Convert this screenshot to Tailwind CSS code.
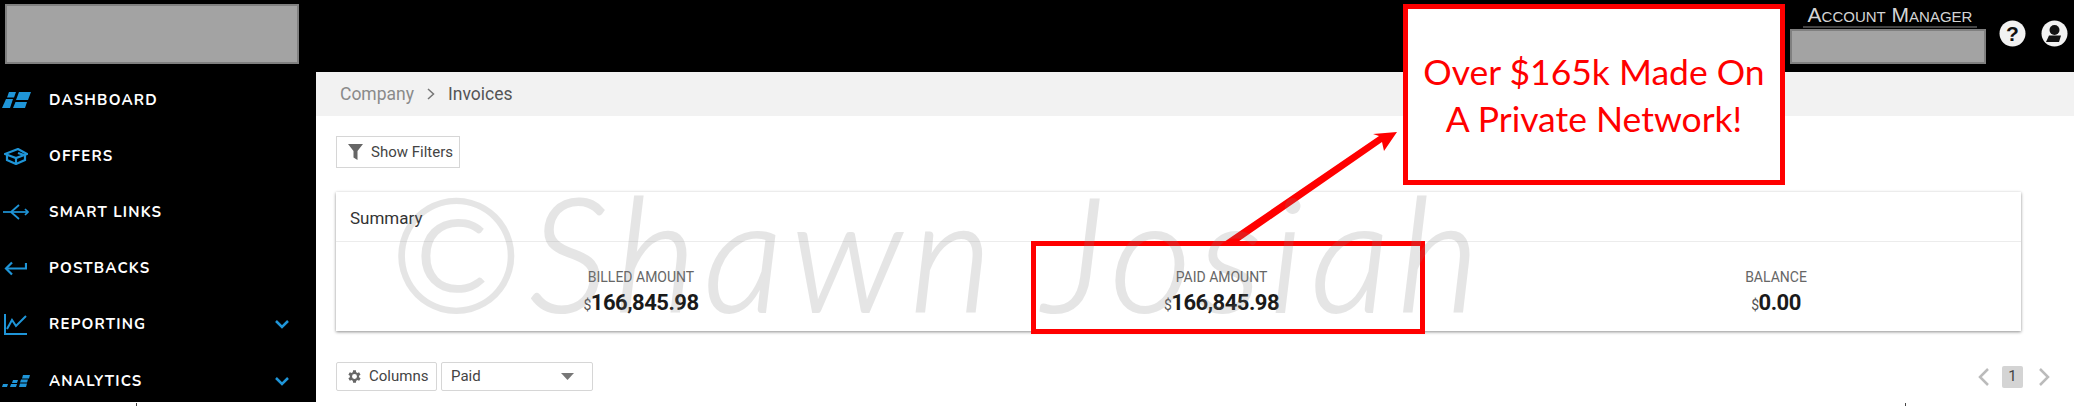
<!DOCTYPE html>
<html>
<head>
<meta charset="utf-8">
<script src="https://cdn.jsdelivr.net/npm/@tailwindcss/browser@4"></script>
</head>
<body class="bg-white">
<div class="relative w-[2074px] h-[406px] overflow-hidden bg-white font-['Roboto',sans-serif]">
  <header class="h-[72px] bg-black flex items-start justify-between">
    <div class="mt-[4px] ml-[5px] w-[294px] h-[60px] bg-[#a3a3a3] border-2 border-[#808080]"></div>
    <div class="flex items-start pr-[6px]">
      <div class="flex flex-col items-center w-[196px] mr-[13px]">
        <div class="mt-[4px] ml-[4px] h-[24px] w-[174px] text-center text-[#d4d4d4] text-[21px] leading-[22px] whitespace-nowrap font-['Liberation_Sans',sans-serif] [font-variant:small-caps] border-b-2 border-[#444]">Account Manager</div>
        <div class="w-[196px] h-[35px] mt-[1px] bg-[#a3a3a3] border-2 border-[#808080]"></div>
      </div>
      <svg class="mt-[20px] mr-[15px]" width="27" height="27" viewBox="0 0 27 27"><circle cx="13.5" cy="13.5" r="13" fill="#f2f2f2"/><text x="13.5" y="21" text-anchor="middle" font-family="Liberation Sans" font-weight="700" font-size="21" fill="#111">?</text></svg>
      <svg class="mt-[20px]" width="27" height="27" viewBox="0 0 27 27"><circle cx="13.5" cy="13.5" r="13" fill="#f2f2f2"/><circle cx="13.5" cy="10" r="5" fill="#111"/><path d="M5 22 L8 15.500 H20 L18 22 Z" fill="#111"/></svg>
    </div>
  </header>
  <div class="flex">
    <aside class="w-[316px] h-[330px] bg-black font-['Nunito','Lato',sans-serif]">
      <nav class="flex flex-col text-white font-bold text-[15px] tracking-[1.2px]">
        <a class="h-[56px] flex items-center">
          <span class="w-[49px] pl-[2px] flex"><svg width="29" height="16" viewBox="0 0 29 16" fill="#1f95d8"><path d="M7 0H14L12 5.500H5Z"/><path d="M17 0H29L26 8H14Z"/><path d="M4 7H11L8 16H0Z"/><path d="M13.500 10H25L23 16H11Z"/></svg></span>DASHBOARD</a>
        <a class="h-[56px] flex items-center">
          <span class="w-[49px] pl-[4px] flex"><svg width="24" height="17" viewBox="0 0 24 17" fill="none" stroke="#1f95d8" stroke-width="2.200"><path d="M1 6L12 10L23 6L14 1L1 6Z"/><path d="M3 7V12L12 16L21 12V7"/><path d="M12 10V16"/><path d="M14 5L20 7"/></svg></span>OFFERS</a>
        <a class="h-[56px] flex items-center">
          <span class="w-[49px] pl-[3px] flex"><svg width="26" height="16" viewBox="0 0 26 16" fill="none" stroke="#1f95d8" stroke-width="1.700"><path d="M0 8H25"/><path d="M8 8L16 1"/><path d="M8 8L16 15"/><path d="M22 5L25 8L22 11"/></svg></span>SMART LINKS</a>
        <a class="h-[56px] flex items-center">
          <span class="w-[49px] pl-[4px] flex"><svg width="23" height="15" viewBox="0 0 23 15" fill="none" stroke="#1f95d8" stroke-width="2.200"><path d="M22 2V7.500H2"/><path d="M8 1.500L2 7.500L8 13.500"/></svg></span>POSTBACKS</a>
        <a class="h-[56px] flex items-center">
          <span class="w-[49px] pl-[4px] flex"><svg width="24" height="21" viewBox="0 0 24 21" fill="none" stroke="#1f95d8" stroke-width="2"><path d="M1 0V20H23"/><path d="M3 15L8 6L12 12L22 2"/></svg></span>REPORTING
          <svg class="ml-auto mr-[27px]" width="14" height="9" viewBox="0 0 14 9" fill="none" stroke="#1f95d8" stroke-width="2.500"><path d="M1 1L7 7L13 1"/></svg></a>
        <a class="h-[58px] flex items-center">
          <span class="w-[49px] pl-[2px] flex"><svg width="28" height="13" viewBox="0 0 28 13" fill="#1f95d8"><path d="M1 9H6L5 12H0Z"/><path d="M9 9H15L14 12H8Z"/><path d="M18 8.500H25L24 12H17Z"/><path d="M11 5H16L15 8H10Z"/><path d="M19 4.500H26L25 7.500H18Z"/><path d="M21 0H28L27 3.500H20Z"/></svg></span>ANALYTICS
          <svg class="ml-auto mr-[27px]" width="14" height="9" viewBox="0 0 14 9" fill="none" stroke="#1f95d8" stroke-width="2.500"><path d="M1 1L7 7L13 1"/></svg></a>
      </nav>
    </aside>
    <main class="flex-1 bg-white">
      <div class="h-[44px] bg-[#f2f2f2] flex items-center pl-[24px] text-[17.5px] text-[#8a8a8a]">
        <span>Company</span>
        <svg class="mx-[13px]" width="8" height="12" viewBox="0 0 8 12" fill="none" stroke="#777" stroke-width="1.500"><path d="M1 1L6.500 6L1 11"/></svg>
        <span class="text-[#555]">Invoices</span>
      </div>
      <div class="pl-[20px] pr-[53px]">
        <button class="mt-[20px] h-[32px] w-[124px] border border-[#d6d6d6] flex items-center pl-[11px] text-[15px] text-[#444]">
          <svg class="mr-[8px]" width="15" height="16" viewBox="0 0 15 16" fill="#666"><path d="M0 0H15L9.500 7V16L5.500 13.500V7Z"/></svg>Show Filters</button>
        <section class="mt-[24px] h-[139px] bg-white shadow-[0_1px_3px_rgba(0,0,0,0.45)]">
          <div class="h-[50px] pt-[5px] border-b border-[#ececec] flex items-center pl-[14px] text-[17px] text-[#333]">Summary</div>
          <div class="grid grid-cols-[610px_551px_1fr] text-center pt-[27px]">
            <div><div class="text-[14px] leading-[16px] text-[#666]">BILLED AMOUNT</div><div class="mt-[5px] text-[22px] leading-[26px] tracking-[-0.5px] font-bold text-[#1a1a1a]"><span class="text-[14px] font-normal text-[#555]">$</span>166,845.98</div></div>
            <div><div class="text-[14px] leading-[16px] text-[#666]">PAID AMOUNT</div><div class="mt-[5px] text-[22px] leading-[26px] tracking-[-0.5px] font-bold text-[#1a1a1a]"><span class="text-[14px] font-normal text-[#555]">$</span>166,845.98</div></div>
            <div class="pl-[34px]"><div class="text-[14px] leading-[16px] text-[#666]">BALANCE</div><div class="mt-[5px] text-[22px] leading-[26px] tracking-[-0.5px] font-bold text-[#1a1a1a]"><span class="text-[14px] font-normal text-[#555]">$</span>0.00</div></div>
          </div>
        </section>
        <div class="mt-[31px] flex items-center">
          <button class="h-[29px] w-[101px] border border-[#d6d6d6] rounded-[2px] flex items-center pl-[9px] text-[15px] text-[#444]">
            <svg class="mr-[6px]" width="17" height="17" viewBox="0 0 24 24" fill="#666"><path d="M19.400 13a7.600 7.600 0 0 0 0-2l2.100-1.600-2-3.500-2.500 1a7.500 7.500 0 0 0-1.700-1L15 3.300h-4l-.4 2.600a7.500 7.500 0 0 0-1.700 1l-2.500-1-2 3.500L6.500 11a7.600 7.600 0 0 0 0 2l-2.100 1.600 2 3.500 2.500-1a7.500 7.500 0 0 0 1.700 1l.4 2.600h4l.4-2.600a7.500 7.500 0 0 0 1.700-1l2.500 1 2-3.500ZM13 15.500a3.500 3.500 0 1 1 0-7 3.500 3.500 0 0 1 0 7Z" transform="translate(-1 0)"/></svg>Columns</button>
          <div class="ml-[4px] h-[29px] w-[152px] border border-[#d6d6d6] rounded-[2px] flex items-center justify-between pl-[9px] pr-[18px] text-[15px] text-[#444]">
            <span>Paid</span>
            <svg width="13" height="7" viewBox="0 0 13 7" fill="#777"><path d="M0 0H13L6.500 7Z"/></svg>
          </div>
          <div class="ml-auto flex items-center mr-[-29px]">
            <svg width="12" height="18" viewBox="0 0 12 18" fill="none" stroke="#bbb" stroke-width="2.500"><path d="M10 1L2 9L10 17"/></svg>
            <span class="ml-[12px] mr-[15px] w-[21px] h-[22px] bg-[#d4d4d4] rounded-[2px] flex items-center justify-center text-[15px] text-[#444]">1</span>
            <svg width="12" height="18" viewBox="0 0 12 18" fill="none" stroke="#bbb" stroke-width="2.500"><path d="M2 1L10 9L2 17"/></svg>
          </div>
        </div>
      </div>
    </main>
  </div>
  <!-- annotations over the screenshot -->
  <div class="absolute left-[1031px] top-[241px] w-[394px] h-[93px] border-[5px] border-[#ff0000]"></div>
  <svg class="absolute left-0 top-0 pointer-events-none" width="2074" height="406" viewBox="0 0 2074 406" fill="#ff0000"><path d="M1224 242L1379 136L1373 134L1397 132L1384 151L1382 142L1232 246Z"/></svg>
  <div class="absolute left-[1403px] top-[4px] w-[382px] h-[181px] bg-white border-[5px] border-[#ff0000] flex flex-col items-center justify-center text-[#ff0000] text-[35.5px] leading-[47px] font-['Lato',sans-serif]">
    <div>Over $165k Made On</div>
    <div>A Private Network!</div>
  </div>
  <div class="absolute left-[389px] top-[166px] text-[158px] leading-[170px] tracking-[8px] whitespace-nowrap italic font-light text-[#808080] opacity-20 [-webkit-text-stroke:2px_#808080] font-['Lato',sans-serif] pointer-events-none">©Shawn Josiah</div>
  <span class="absolute left-[136px] top-[403px] w-px h-[3px] bg-[#444]"></span>
  <span class="absolute left-[1905px] top-[403px] w-px h-[3px] bg-[#444]"></span>
</div>
</body>
</html>
